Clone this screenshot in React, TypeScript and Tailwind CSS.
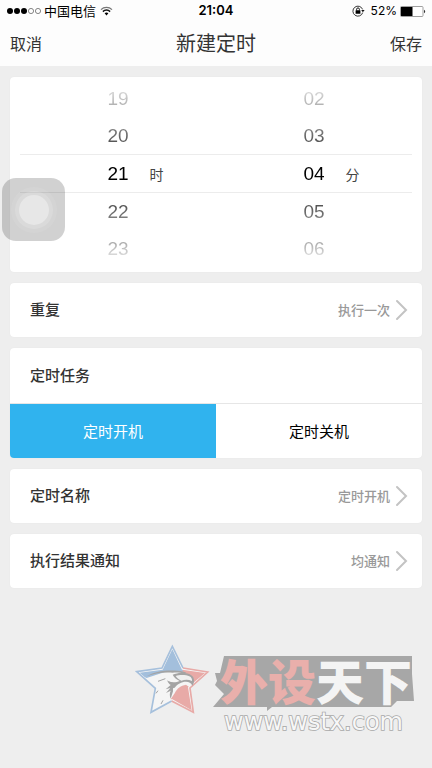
import { useState } from 'react';
import clsx from 'clsx';

const HOURS = ['19', '20', '21', '22', '23'];
const MINUTES = ['02', '03', '04', '05', '06'];

// Numbers fade out towards the top and bottom edge of the wheel
const FADES = [
  'bg-gradient-to-b from-[#dedede] to-[#a8a8a8]',
  'bg-gradient-to-b from-[#8a8a8a] to-[#4a4a4a]',
  'bg-black',
  'bg-gradient-to-b from-[#4a4a4a] to-[#8a8a8a]',
  'bg-gradient-to-b from-[#a0a0a0] to-[#e6e6e6]',
];

function StatusBar() {
  return (
    <div className="grid grid-cols-[1fr_auto_1fr] items-center h-[22px] px-[6px] text-xs text-black">
      <div className="flex items-center">
        <svg width="37" height="8" viewBox="0 0 37 8" aria-hidden="true">
          <circle cx="4" cy="4" r="3" />
          <circle cx="11" cy="4" r="3" />
          <circle cx="18" cy="4" r="3" />
          <circle cx="25" cy="4" r="2.6" fill="none" stroke="#555" strokeWidth="0.7" />
          <circle cx="32" cy="4" r="2.6" fill="none" stroke="#555" strokeWidth="0.7" />
        </svg>
        <span className="ml-px text-[13px]">中国电信</span>
        <svg className="ml-1" width="13" height="10" viewBox="0 0 13 10" fill="none" aria-hidden="true">
          <path d="M1 3.6C4 .6 9 .6 12 3.6" stroke="#777" strokeWidth="1.3" />
          <path d="M2.9 5.6c2-2 5.2-2 7.2 0" stroke="#111" strokeWidth="1.5" />
          <path d="M4.6 7.3c1-1 2.8-1 3.8 0L6.5 9.4z" fill="#000" />
        </svg>
      </div>
      <span className="font-['Inter',sans-serif] text-[13px] font-semibold">21:04</span>
      <div className="flex items-center justify-end font-['Inter',sans-serif]">
        <svg width="13" height="12" viewBox="0 0 13 12" fill="none" aria-hidden="true">
          <path d="M10.6 4.4A5 5 0 1 0 10.7 7.6" stroke="#222" strokeWidth="0.9" />
          <path d="M9.2 5h3.4l-1.7 2.3z" fill="#111" />
          <rect x="3.6" y="5.2" width="4.8" height="3.6" rx="0.4" fill="#000" />
          <path d="M4.6 5.4V4.3a1.4 1.4 0 0 1 2.8 0v1.1" stroke="#000" strokeWidth="0.9" />
        </svg>
        <span className="ml-[6px]">52%</span>
        <svg className="ml-[3px]" width="26" height="11" viewBox="0 0 26 11" aria-hidden="true">
          <rect x="0.5" y="0.5" width="22.5" height="10" rx="1" fill="#fff" stroke="#888" strokeWidth="0.8" />
          <rect x="1" y="1" width="11.5" height="9" fill="#000" />
          <path d="M24 3.8c1.6.4 1.6 3 0 3.4z" fill="#333" />
        </svg>
      </div>
    </div>
  );
}

function Wheel({ values, unit, label }: { values: string[]; unit: string; label: string }) {
  return (
    <ul aria-label={label} className="flex-1">
      {values.map((value, i) => (
        <li
          key={value}
          className={clsx(
            'grid grid-cols-[1fr_auto_1fr] items-center',
            i === 2 ? 'h-[39px] border-y border-[#ececec]' : 'h-[37px]'
          )}
        >
          <button
            className={clsx(
              "col-start-2 bg-clip-text text-transparent font-['Liberation_Sans',sans-serif] text-[19px] leading-5",
              FADES[i]
            )}
          >
            {value}
          </button>
          {i === 2 && <span className="pl-[21px] text-sm leading-5 text-[#444]">{unit}</span>}
        </li>
      ))}
    </ul>
  );
}

function SettingRow({ label, value }: { label: string; value: string }) {
  return (
    <button className="flex items-center w-full h-[54px] pl-5 pr-[14px] rounded-[4px] bg-white shadow-[0_0_1px_#ddd]">
      <span className="pb-[2px] text-[15px] font-medium text-[#333]">{label}</span>
      <span className="ml-auto text-[13px] font-medium text-[#999]">{value}</span>
      <svg className="ml-[5px]" width="13" height="22" viewBox="0 0 13 22" fill="none" aria-hidden="true">
        <path d="M2 2l9 9-9 9" stroke="#c3c3c3" strokeWidth="2" strokeLinecap="round" />
      </svg>
    </button>
  );
}

function Watermark() {
  return (
    <div className="flex self-end mt-[52px] mr-3" aria-hidden="true">
      {/* Eagle star */}
      <svg width="80" height="80" viewBox="0 0 240 240">
        <defs>
          <clipPath id="star">
            <path d="M127 28L156 89 225 99 174 142 185 211 126 177 69 210 82 144 29 98 98 89z" />
          </clipPath>
        </defs>
        <path d="M127 20L158 86 230 97 178 143 188 216 125 181 65 216 77 144 23 96 96 85z" fill="#f5f5f5" />
        <path d="M125 183L63 217 76 145 20 95 96 84 127 19 159 84" fill="none" stroke="#a6c0dc" strokeWidth="5" />
        <path d="M159 84L233 96 180 144 190 217 125 183" fill="none" stroke="#e8aaa7" strokeWidth="5" />
        <g clipPath="url(#star)">
          <path d="M20 20H160V96H105L50 114 20 104z" fill="#a3bfdc" />
          <path d="M158 84H234V140H190L180 110 158 98z" fill="#e8aaa7" />
          <path d="M134 160C142 144 152 137 168 134L190 150V215L122 178z" fill="#e8aaa7" />
        </g>
        {/* Crown and brow */}
        <path d="M50 109C72 94 108 89 143 92c12 1 20 3 26 6l-5 4c-12-4-24-5-36-4-29-2-54 2-78 11z" fill="#a4a4a4" />
        {/* Beak */}
        <path
          d="M128 104c12-6 28-6 40-4 14 2 23 9 24 19 1 8-2 13-5 18-4-9-10-12-19-12-14 0-26 7-34 18l-13 3c4-3 7-7 9-12-6-2-11-5-15-10 11 4 24 4 34-1-9-5-17-10-21-19z"
          fill="#a4a4a4"
        />
        <path d="M137 108c12-5 32-4 41 1 6 3 9 8 8 14-11-5-22-4-32-1-7-3-13-8-17-14z" fill="#f0f0f0" />
        {/* Neck feathers */}
        <path d="M112 121c7 7 16 10 28 9-10 7-12 15-11 24l-7 22c-4-9-3-17 0-24l-14 7 13-15-14 4 15-13c-6-4-9-8-10-14z" fill="#a4a4a4" />
        <path d="M84 124l22-8M78 160l6-8M93 192l6-11" fill="none" stroke="#a4a4a4" strokeWidth="3" />
      </svg>
      {/* Word mark on its jagged plate */}
      <svg className="mt-1" width="210" height="95" viewBox="0 0 210 95">
        <path
          d="M14 12H202V30L204 57H187L181 63H62L57 67V63H3L14 50 5 41 7 37 5 29H10z"
          fill="#a7a7a7"
        />
        <text
          x="10"
          y="56"
          fontFamily="Liberation Sans, Noto Sans CJK SC, sans-serif"
          fontSize="48"
          fontWeight="900"
          fill="#e9afab"
        >
          外设<tspan fill="#f4f4f4">天下</tspan>
        </text>
        <text
          x="14"
          y="86"
          fontFamily="DejaVu Sans, sans-serif"
          fontSize="24"
          fill="#f7f7f7"
          stroke="#a9a9a9"
          strokeWidth="1.6"
          paintOrder="stroke"
        >
          www.wstx.com
        </text>
      </svg>
    </div>
  );
}

const TASKS = ['定时开机', '定时关机'];

export default function App() {
  const [task, setTask] = useState(TASKS[0]);

  return (
    <div className="relative flex flex-col min-h-screen bg-[#eee] font-['Noto_Sans_CJK_SC',sans-serif]">
      <header className="bg-[#fdfdfd]">
        <StatusBar />
        <div className="grid grid-cols-[1fr_auto_1fr] items-center h-11 px-[10px] pb-[2px] text-[#333]">
          <button className="justify-self-start text-base">取消</button>
          <h1 className="text-xl">新建定时</h1>
          <button className="justify-self-end text-base">保存</button>
        </div>
      </header>

      <main className="flex flex-col gap-[11px] px-[10px] pt-[11px]">
        <section className="flex px-[10px] pt-[3px] pb-[5px] rounded-[4px] bg-white shadow-[0_0_1px_#ddd]">
          <Wheel values={HOURS} unit="时" label="时" />
          <Wheel values={MINUTES} unit="分" label="分" />
        </section>

        <SettingRow label="重复" value="执行一次" />

        <section className="overflow-hidden rounded-[4px] bg-white shadow-[0_0_1px_#ddd]">
          <h2 className="flex items-center h-14 pl-5 border-b border-[#e6e6e6] text-[15px] font-medium text-[#333]">
            定时任务
          </h2>
          <div className="grid grid-cols-2">
            {TASKS.map((name) => (
              <button
                key={name}
                aria-pressed={task === name}
                onClick={() => setTask(name)}
                className={clsx('h-[54px] text-[15px]', task === name ? 'bg-[#30b3ee] text-white' : 'text-black')}
              >
                {name}
              </button>
            ))}
          </div>
        </section>

        <SettingRow label="定时名称" value="定时开机" />
        <SettingRow label="执行结果通知" value="均通知" />
      </main>

      <Watermark />

      {/* Floating assistive button */}
      <button
        aria-label="AssistiveTouch"
        className="absolute left-[2px] top-[178px] grid place-items-center size-[63px] rounded-[14px] bg-black/18"
      >
        <span className="grid place-items-center size-[46px] rounded-full bg-white/8">
          <span className="grid place-items-center size-[38px] rounded-full bg-white/15">
            <span className="size-[30px] rounded-full bg-white/35" />
          </span>
        </span>
      </button>
    </div>
  );
}
